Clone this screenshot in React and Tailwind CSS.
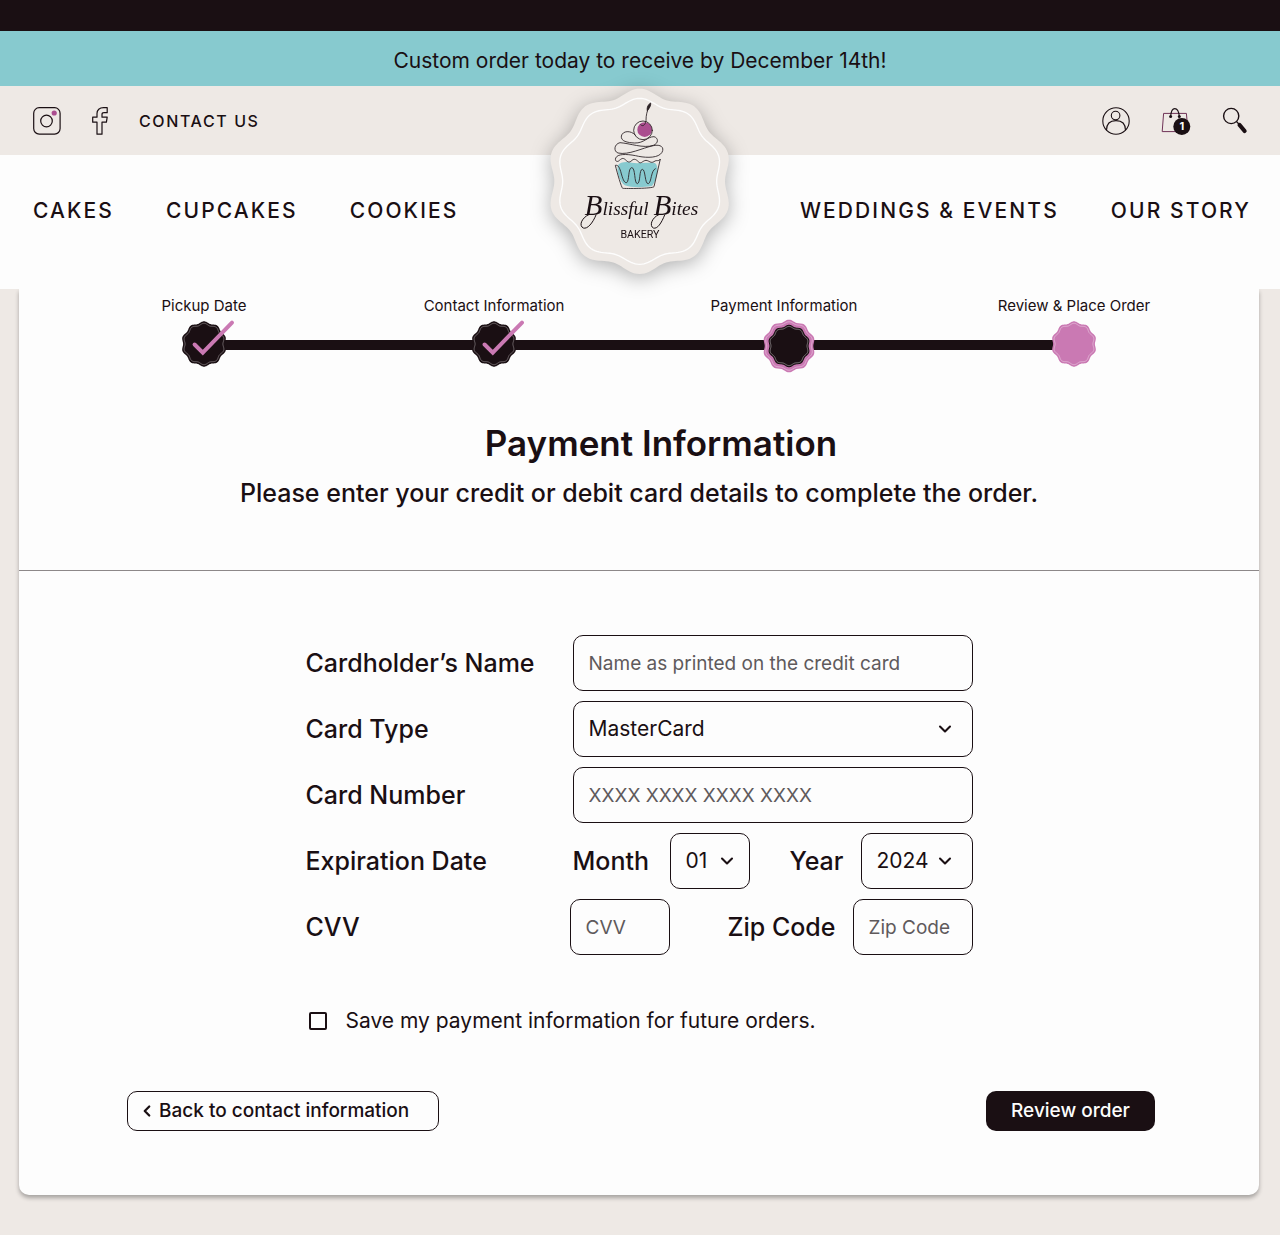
import { useState } from "react";
import { ChevronDown, ChevronLeft } from "lucide-react";

// Closed outline with a wavy edge, used by the logo and the step markers
const scallop = (cx, cy, radius, depth) => {
  const points = [];
  for (let i = 0; i < 240; i++) {
    const angle = (i / 240) * Math.PI * 2;
    const r = radius + depth * Math.cos(angle * 10);
    points.push(`${(cx + r * Math.sin(angle)).toFixed(2)} ${(cy - r * Math.cos(angle)).toFixed(2)}`);
  }
  return `M${points.join("L")}Z`;
};

const leftLinks = ["CAKES", "CUPCAKES", "COOKIES"];
const rightLinks = ["WEDDINGS & EVENTS", "OUR STORY"];
const steps = ["Pickup Date", "Contact Information", "Payment Information", "Review & Place Order"];

const fieldClass =
  "h-14 rounded-[10px] border border-[#1a0f13] bg-transparent px-[15px] text-[19px] text-[#1a0f13] placeholder:text-[#5f5a5c] placeholder:opacity-100";
const labelClass = "text-[25px] leading-8 font-medium";

const InstagramIcon = () => (
  <svg className="h-7 w-7" viewBox="0 0 28 28" fill="none" stroke="#1a0f13" strokeWidth="1.2">
    <rect x="0.7" y="0.7" width="26.4" height="26.4" rx="5.5" />
    <circle cx="13.5" cy="14" r="5.8" />
    <circle cx="21.2" cy="6" r="2.6" fill="#ab4d8f" stroke="none" />
  </svg>
);

const FacebookIcon = () => (
  <svg className="h-7 w-4" viewBox="0 0 16 28" fill="none" stroke="#1a0f13" strokeWidth="1.2" strokeLinejoin="round">
    <path d="M15.2 0.7H11.5C7.5 0.7 5 3 5 6.5V10.2H0.7V15.2H5V27.2H10V15.2H14.4L15.2 10.2H10V7.5C10 6.3 10.8 5.7 12 5.7H15.2Z" />
  </svg>
);

const AccountIcon = () => (
  <svg className="h-7 w-7" viewBox="0 0 28 28" fill="none" stroke="#1a0f13" strokeWidth="1.1">
    <circle cx="14" cy="14" r="13.2" />
    <circle cx="13.6" cy="8.6" r="4.3" />
    <path d="M4.5 23.2C4.5 17 8 13.6 14 13.6C20 13.6 23.5 17 23.5 23.2" />
  </svg>
);

const BagIcon = () => (
  <svg className="h-7 w-[30px]" viewBox="0 0 30 28" fill="none">
    <path d="M2.6 6.4H25.4L27 24.6H1.2Z" stroke="#6f3357" strokeWidth="1" />
    <path d="M9.6 9.5C10 4.5 11.5 1.6 13.8 1.6C16.2 1.6 17.8 4.5 18.4 9.5" stroke="#1a0f13" strokeWidth="1.1" />
    <circle cx="9.6" cy="9.6" r="1.5" fill="#1a0f13" />
    <circle cx="18.3" cy="9.6" r="1.5" fill="#1a0f13" />
    <circle cx="20.8" cy="19.4" r="8.5" fill="#1a0f13" />
    <text x="20.8" y="23.2" textAnchor="middle" fill="#fdfdfd" className="font-['Inter',sans-serif] text-[11px] font-bold">
      1
    </text>
  </svg>
);

const SearchIcon = () => (
  <svg className="h-7 w-[26px]" viewBox="0 0 26 28" fill="none" stroke="#1a0f13">
    <circle cx="9.2" cy="9" r="7.6" strokeWidth="1.4" />
    <path d="M14.6 14.6L17.5 17.8" strokeWidth="1.4" />
    <path d="M17.6 18L22.6 24" strokeWidth="4.2" strokeLinecap="round" />
  </svg>
);

const Logo = () => (
  <svg
    className="h-[200px] w-[200px] overflow-visible drop-shadow-[0_4px_10px_rgba(0,0,0,0.3)]"
    viewBox="0 0 600 600"
    role="img"
    aria-label="Blissful Bites Bakery"
  >
    <path d={scallop(299, 304, 267, 11)} fill="#eee9e5" />
    <path d={scallop(299, 304, 240, 9)} fill="none" stroke="#fdfdfd" strokeWidth="4" />

    {/* Cupcake */}
    <path d="M234 256C240 246 258 244 275 248C295 252 315 246 345 249C358 258 354 296 336 318C310 323 272 323 254 316C240 306 228 274 234 256Z" fill="#87cacf" />
    <circle cx="314" cy="149" r="22" fill="#ab4d8f" />
    <g fill="none" stroke="#2b2225" strokeWidth="2.6" strokeLinecap="round" strokeLinejoin="round">
      <circle cx="309" cy="151" r="28" />
      <path d="M302 134C308 142 317 134 318 122C318 105 321 94 327 80" />
      <path d="M322 92C319 82 326 72 332 69C333 77 329 84 322 92Z" fill="#2b2225" />
      <path d="M286 165C272 150 248 152 244 168C242 184 262 188 284 189C312 190 322 170 342 170C356 174 356 190 340 196C310 206 270 190 240 188C222 192 220 214 234 219C266 226 306 204 340 197C362 192 374 202 366 217C356 234 322 234 296 229C270 223 240 220 230 230C222 238 228 248 236 243C244 236 248 232 256 239C264 247 268 249 276 241C284 234 290 240 297 247C304 252 308 242 318 241C328 242 332 251 342 245C350 238 356 246 361 237L342 320C338 326 256 326 248 325C244 322 232 280 226 256C234 254 238 262 242 274C248 296 252 309 260 308C268 304 264 264 275 263C287 262 282 311 292 311C302 309 297 268 307 268C317 268 314 313 325 311C335 307 332 272 346 266" />
    </g>

    <text x="304" y="405" textAnchor="middle" fill="#1a0f13" className="font-['Liberation_Serif',serif] text-[58px] italic">
      <tspan className="text-[88px]">B</tspan>lissful <tspan className="text-[88px]">B</tspan>ites
    </text>
    {/* Flourishes under the two capitals */}
    <g fill="none" stroke="#1a0f13" strokeWidth="3" strokeLinecap="round">
      <path d="M168 405C158 430 142 448 130 444C116 438 124 414 146 404" />
      <path d="M374 405C364 430 352 448 340 444C328 438 334 414 356 404" />
    </g>
    <text x="300" y="475" textAnchor="middle" fill="#1a0f13" className="font-['Roboto',sans-serif] text-[32px]">
      BAKERY
    </text>
  </svg>
);

const StepBadge = ({ state }) => {
  if (state === "current") {
    return (
      <svg className="relative z-10 h-14 w-full overflow-visible" viewBox="0 0 52 56">
        <path d={scallop(26, 29, 25.3, 1)} fill="#ca79b3" />
        <path d={scallop(26, 29, 23.3, 0.9)} fill="none" stroke="#e8c3de" strokeWidth="0.7" />
        <path d={scallop(26, 29, 20.4, 0.8)} fill="#1a0f13" />
        <path d={scallop(26, 29, 18.8, 0.8)} fill="none" stroke="#a39da0" strokeWidth="0.7" />
      </svg>
    );
  }
  const done = state === "done";
  return (
    <svg className="relative z-10 h-14 w-full overflow-visible" viewBox="0 0 44 56">
      <path d={scallop(22, 27, 21.8, 0.9)} fill={done ? "#1a0f13" : "#ca79b3"} />
      <path d={scallop(22, 27, 19.8, 0.9)} fill="none" stroke={done ? "#8d8588" : "#e8c3de"} strokeWidth="0.7" />
      {done && (
        <path d="M12.6 27.5L20.8 35.6L50 5.6" fill="none" stroke="#ca79b3" strokeWidth="4" strokeLinecap="round" />
      )}
    </svg>
  );
};

const Connector = () => <div className="-mx-1 h-[10px] bg-[#1a0f13]" />;

const SelectField = ({ id, options, className, value, onChange }) => (
  <div className={`relative ${className}`}>
    <select
      id={id}
      value={value}
      onChange={(e) => onChange(e.target.value)}
      className="h-14 w-full appearance-none rounded-[10px] border border-[#1a0f13] bg-transparent px-[15px] text-[21px]"
    >
      {options.map((option) => (
        <option key={option}>{option}</option>
      ))}
    </select>
    <ChevronDown className="pointer-events-none absolute top-[18px] right-[18px] h-5 w-5" strokeWidth={2.5} />
  </div>
);

const Header = () => (
  <header className="relative">
    <div className="h-[31px] bg-[#1a0f13]" />
    <p className="bg-[#87cacf] pt-4 pb-[11px] text-center text-[21px] leading-7">
      Custom order today to receive by December 14th!
    </p>
    <div className="flex h-[69px] items-center justify-between bg-[#eee9e5] pr-8 pl-[33px]">
      <div className="flex items-center gap-[31px]">
        <a href="#instagram" aria-label="Instagram"><InstagramIcon /></a>
        <a href="#facebook" aria-label="Facebook"><FacebookIcon /></a>
        <a href="#contact" className="text-base font-medium tracking-widest">CONTACT US</a>
      </div>
      <div className="flex items-center gap-[31px]">
        <button type="button" aria-label="Account"><AccountIcon /></button>
        <button type="button" aria-label="Shopping bag, 1 item"><BagIcon /></button>
        <button type="button" aria-label="Search"><SearchIcon /></button>
      </div>
    </div>
    <nav className="flex h-[134px] justify-between bg-[#fdfdfd] pt-[42px] pr-[29px] pl-[33px] text-[21px] leading-7 font-medium tracking-widest">
      <div className="flex gap-[52px]">
        {leftLinks.map((link) => (
          <a key={link} href="#menu">{link}</a>
        ))}
      </div>
      <div className="flex gap-[52px]">
        {rightLinks.map((link) => (
          <a key={link} href="#about">{link}</a>
        ))}
      </div>
    </nav>
    <a href="#home" className="absolute top-20 left-1/2 -translate-x-1/2"><Logo /></a>
  </header>
);

const Stepper = () => (
  <div>
    <ol className="flex justify-between px-[100px] pt-[7px] pb-px text-[15px] leading-5">
      {steps.map((step) => (
        <li key={step} className="w-[170px] text-center">{step}</li>
      ))}
    </ol>
    <div className="grid grid-cols-[44px_246fr_44px_247fr_52px_237fr_44px] items-center px-[163px]">
      <StepBadge state="done" />
      <Connector />
      <StepBadge state="done" />
      <Connector />
      <StepBadge state="current" />
      <Connector />
      <StepBadge state="next" />
    </div>
  </div>
);

const PaymentForm = () => {
  const [cardType, setCardType] = useState("MasterCard");
  const [month, setMonth] = useState("01");
  const [year, setYear] = useState("2024");
  const [save, setSave] = useState(false);

  return (
    <form onSubmit={(e) => e.preventDefault()}>
      <div className="mx-auto flex w-full max-w-[667px] flex-col gap-[10px] pt-16">
        <div className="flex items-center">
          <label htmlFor="name" className={`w-[267px] shrink-0 ${labelClass}`}>Cardholder’s Name</label>
          <input id="name" placeholder="Name as printed on the credit card" className={`min-w-0 flex-1 ${fieldClass}`} />
        </div>
        <div className="flex items-center">
          <label htmlFor="type" className={`w-[267px] shrink-0 ${labelClass}`}>Card Type</label>
          <SelectField id="type" value={cardType} onChange={setCardType} options={["MasterCard", "Visa", "Discover"]} className="flex-1" />
        </div>
        <div className="flex items-center">
          <label htmlFor="number" className={`w-[267px] shrink-0 ${labelClass}`}>Card Number</label>
          <input id="number" placeholder="XXXX XXXX XXXX XXXX" className={`min-w-0 flex-1 ${fieldClass}`} />
        </div>
        <div className="flex items-center">
          <span className={`w-[267px] shrink-0 ${labelClass}`}>Expiration Date</span>
          <label htmlFor="month" className={`w-[97px] ${labelClass}`}>Month</label>
          <SelectField id="month" value={month} onChange={setMonth} options={["01", "02", "03", "04", "05", "06"]} className="w-20 [&>svg]:right-[13px]" />
          <label htmlFor="year" className={`ml-auto pr-[17px] ${labelClass}`}>Year</label>
          <SelectField id="year" value={year} onChange={setYear} options={["2024", "2025", "2026", "2027"]} className="w-28" />
        </div>
        <div className="flex items-center">
          <label htmlFor="cvv" className={`w-[264px] shrink-0 ${labelClass}`}>CVV</label>
          <input id="cvv" placeholder="CVV" className={`w-[100px] ${fieldClass}`} />
          <label htmlFor="zip" className={`ml-auto pr-[17px] ${labelClass}`}>Zip Code</label>
          <input id="zip" placeholder="Zip Code" className={`w-[120px] ${fieldClass}`} />
        </div>
        <label className="mt-[42px] flex items-center gap-[19px] pl-[3px] text-[21px] leading-7">
          <input
            type="checkbox"
            checked={save}
            onChange={(e) => setSave(e.target.checked)}
            className="h-[18px] w-[18px] appearance-none rounded-[2px] border-2 border-[#1a0f13] checked:bg-[#1a0f13]"
          />
          Save my payment information for future orders.
        </label>
      </div>
      <div className="mt-14 flex justify-between pr-[104px] pb-16 pl-[108px]">
        <button type="button" className="flex h-10 w-[312px] items-center rounded-[10px] border border-[#1a0f13] pl-[10px] text-[19px] font-medium">
          <ChevronLeft className="mr-[3px] h-[18px] w-[18px]" strokeWidth={3} />
          Back to contact information
        </button>
        <button type="submit" className="h-10 w-[169px] rounded-[10px] bg-[#1a0f13] text-[19px] font-medium text-[#fdfdfd]">
          Review order
        </button>
      </div>
    </form>
  );
};

export default function App() {
  return (
    <div className="min-h-screen bg-[#eee9e5] pb-10 font-['Inter',sans-serif] text-[#1a0f13]">
      <Header />
      <main className="mr-[21px] ml-[19px] rounded-b-[10px] bg-[#fdfdfd] shadow-[0_3px_4px_rgba(0,0,0,0.3)]">
        <Stepper />
        <div className="border-b border-[#8d8889] pt-[46px] pb-[59px] text-center">
          <h1 className="pl-11 text-[35px] leading-[48px] font-semibold">Payment Information</h1>
          <p className="mt-2 text-[25px] leading-9 font-medium">
            Please enter your credit or debit card details to complete the order.
          </p>
        </div>
        <PaymentForm />
      </main>
    </div>
  );
}
